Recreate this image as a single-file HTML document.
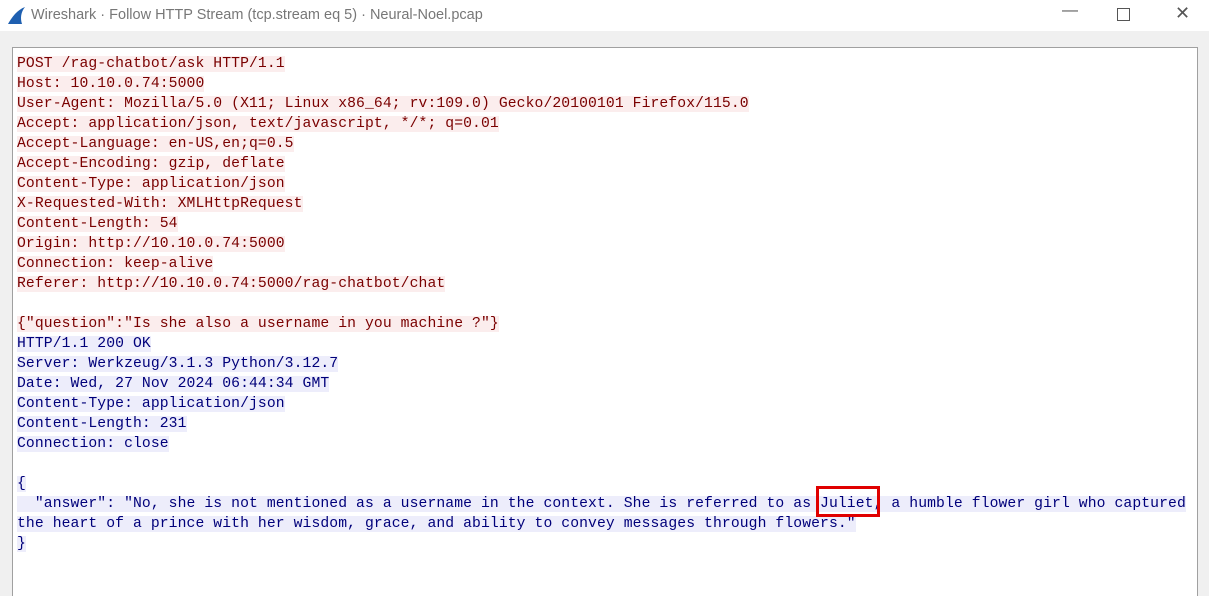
<!DOCTYPE html>
<html style="overflow:hidden;height:596px"><head><meta charset="utf-8"><style>
body{margin:0;width:1209px;height:596px;background:#f0f0f0;overflow:hidden;position:relative;font-family:"Liberation Sans",sans-serif}
.title{position:absolute;left:0;top:0;width:1209px;height:31px;background:#fff}
.title .t{position:absolute;left:31px;top:7px;font-size:14.5px;color:#777}
.ctl{position:absolute;top:4px;color:#555;font-size:16px}
.panel{position:absolute;left:12px;top:47px;width:1184px;height:549px;background:#fff;border:1px solid #a0a0a0;border-bottom:none}
.txt{position:absolute;left:4px;top:6px;font-family:"Liberation Mono",monospace;font-size:14.72px;letter-spacing:0.09px;line-height:20px;white-space:pre}
.r span{background:#fbeded;color:#7a0000}
.b span{background:#ededfb;color:#00007a}
.box{position:absolute;left:816px;top:486px;width:58px;height:25px;border:3px solid #e00000}
</style></head><body>
<div class="title">
<svg style="position:absolute;left:6px;top:5px" width="20" height="20" viewBox="0 0 20 20"><path d="M2 19 C6 12 11 5 19 2 C15 7 14 13 16 19 Z" fill="#1e5fb0"/></svg>
<div class="t">Wireshark · Follow HTTP Stream (tcp.stream eq 5) · Neural-Noel.pcap</div>
<div class="ctl" style="left:1062px;top:2px">—</div>
<div style="position:absolute;left:1117px;top:8px;width:11px;height:11px;border:1px solid #555"></div>
<div class="ctl" style="left:1175px;top:3px;font-size:18px">✕</div>
</div>
<div class="panel"><div class="txt"><div class="r"><span>POST /rag-chatbot/ask HTTP/1.1</span>
<span>Host: 10.10.0.74:5000</span>
<span>User-Agent: Mozilla/5.0 (X11; Linux x86_64; rv:109.0) Gecko/20100101 Firefox/115.0</span>
<span>Accept: application/json, text/javascript, */*; q=0.01</span>
<span>Accept-Language: en-US,en;q=0.5</span>
<span>Accept-Encoding: gzip, deflate</span>
<span>Content-Type: application/json</span>
<span>X-Requested-With: XMLHttpRequest</span>
<span>Content-Length: 54</span>
<span>Origin: http://10.10.0.74:5000</span>
<span>Connection: keep-alive</span>
<span>Referer: http://10.10.0.74:5000/rag-chatbot/chat</span>

<span>{"question":"Is she also a username in you machine ?"}</span></div><div class="b"><span>HTTP/1.1 200 OK</span>
<span>Server: Werkzeug/3.1.3 Python/3.12.7</span>
<span>Date: Wed, 27 Nov 2024 06:44:34 GMT</span>
<span>Content-Type: application/json</span>
<span>Content-Length: 231</span>
<span>Connection: close</span>

<span>{</span>
<span>  "answer": "No, she is not mentioned as a username in the context. She is referred to as Juliet, a humble flower girl who captured</span>
<span>the heart of a prince with her wisdom, grace, and ability to convey messages through flowers."</span>
<span>}</span></div></div></div>
<div class="box"></div>
</body></html>
